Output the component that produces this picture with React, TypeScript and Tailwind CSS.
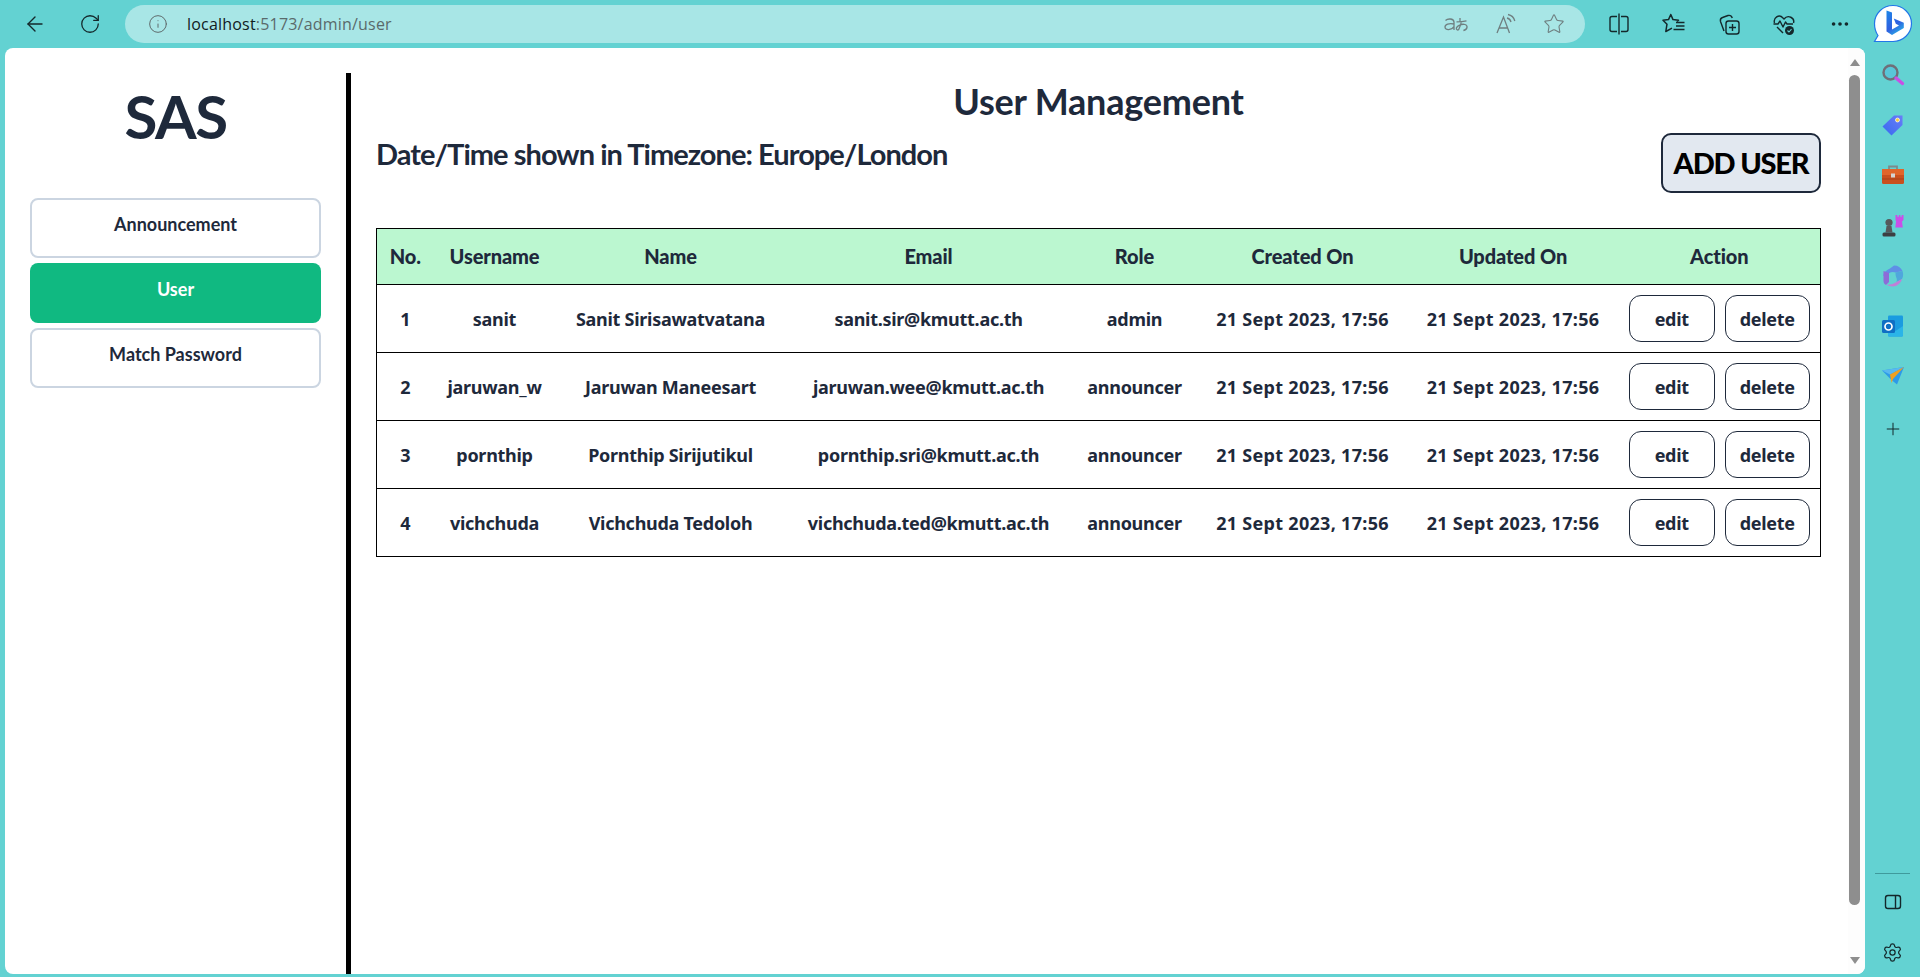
import { ArrowLeft, RotateCw, Info, Star, MoreHorizontal, Plus, Settings } from "lucide-react";

const users = [
  { no: 1, username: "sanit", name: "Sanit Sirisawatvatana", email: "sanit.sir@kmutt.ac.th", role: "admin" },
  { no: 2, username: "jaruwan_w", name: "Jaruwan Maneesart", email: "jaruwan.wee@kmutt.ac.th", role: "announcer" },
  { no: 3, username: "pornthip", name: "Pornthip Sirijutikul", email: "pornthip.sri@kmutt.ac.th", role: "announcer" },
  { no: 4, username: "vichchuda", name: "Vichchuda Tedoloh", email: "vichchuda.ted@kmutt.ac.th", role: "announcer" },
];

const columns = [
  { label: "No.", width: "w-[57px]" },
  { label: "Username", width: "w-[122px]" },
  { label: "Name", width: "w-[230px]" },
  { label: "Email", width: "w-[286px]" },
  { label: "Role", width: "w-[126px]" },
  { label: "Created On", width: "w-[210px]" },
  { label: "Updated On", width: "w-[211px]" },
  { label: "Action", width: "w-[202px]" },
];

const stamp = "21 Sept 2023, 17:56";

function Translate() {
  return (
    <svg width="26" height="24" viewBox="0 0 26 24" fill="none" stroke="#6f7f80" strokeWidth="1.3">
      <path d="M2.500 8.500c2-2 8-2.500 8.500 1.500v8M11 12c-5-1-9 .3-9 3 0 3.500 6.500 3.500 9-.5" />
      <path d="M17 6v3.500M13.500 9.800c3.500 0 7-.3 10-1M18.500 9c-.5 3.500-2 7-2.800 8.500-1 1-2.700.2-2.300-1.500.6-2 5-4.500 8.500-3.500 3.300 1 2.800 5-1.500 6" />
    </svg>
  );
}

function ReadAloud() {
  return (
    <svg width="24" height="24" viewBox="0 0 24 24" fill="none" stroke="#6f7f80" strokeWidth="1.3">
      <path d="M3 21 9.500 5l6 16M5.300 16h8.200" />
      <path d="M13 6c2 .5 3.500 2 4 4M14 2.500c3.500.7 6 3.300 6.800 6.500" />
    </svg>
  );
}

function SplitScreen() {
  return (
    <svg width="24" height="24" viewBox="0 0 24 24" fill="none" stroke="#14282b" strokeWidth="1.4">
      <path d="M12 1.500v21M10 4.500H5a2 2 0 0 0-2 2v11a2 2 0 0 0 2 2h5M14 4.500h5a2 2 0 0 1 2 2v11a2 2 0 0 1-2 2h-5" />
    </svg>
  );
}

function Favorites() {
  return (
    <svg width="24" height="24" viewBox="0 0 24 24" fill="none" stroke="#14282b" strokeWidth="1.500" strokeLinejoin="round">
      <path d="M15 9.500l1.500-1.300-5.500-.6L8.800 2.500 6.500 7.600 1 8.300l4 3.900-1.200 7.300 6.200-3.300" />
      <path d="M14 10.500h8.500M14 14h8.500M11.500 17.500h11" />
    </svg>
  );
}

function Collections() {
  return (
    <svg width="24" height="24" viewBox="0 0 24 24" fill="none" stroke="#14282b" strokeWidth="1.400">
      <rect x="9" y="9" width="13" height="13" rx="2.500" />
      <path d="M15.500 12v7M12 15.500h7" />
      <path d="M7 19 3.500 9.500c-.5-2 .5-3.500 2-4L11 3.500c2-.5 3.500.2 4.300 2.500" />
    </svg>
  );
}

function Health() {
  return (
    <svg width="24" height="24" viewBox="0 0 24 24" fill="none" stroke="#14282b" strokeWidth="1.400" strokeLinejoin="round">
      <path d="M2.500 11C1 6 7 1.500 11 6l1 1c4-5 11-1 9.500 4" />
      <path d="M1.500 12H6l2-3 3 6 2.500-5 1.500 2h6" />
      <path d="M5 15l6 6" />
      <circle cx="17.500" cy="18.500" r="4.500" fill="#14282b" stroke="none" />
      <path d="M15.500 18.500l1.500 1.500 2.500-2.800" stroke="#63d2d2" strokeWidth="1.100" />
    </svg>
  );
}

function Bing() {
  return (
    <svg width="40" height="40" viewBox="0 0 40 40" fill="none">
      <defs>
        <linearGradient id="bingFill" x1="12" y1="6" x2="30" y2="30" gradientUnits="userSpaceOnUse">
          <stop stopColor="#1b8ae8" />
          <stop offset="0.6" stopColor="#2f5fe0" />
          <stop offset="1" stopColor="#27c3e8" />
        </linearGradient>
      </defs>
      <path d="M20 1.500C30 1.500 38.500 9.500 38.500 19.500S30 37.500 20 37.500H1.500L5 31.500C2.800 28.300 1.500 24 1.500 19.500 1.500 9.500 10 1.500 20 1.500Z" fill="#fff" stroke="#2277e8" strokeWidth="1.200" />
      <path d="M13.500 6.500l5.500 2v17l7-4-3.200-1.700-2-5.300 10 4.300v5.200L19 31l-5.500-3.500Z" fill="url(#bingFill)" />
    </svg>
  );
}

function RailSearch() {
  return (
    <svg width="24" height="24" viewBox="0 0 24 24" fill="none">
      <circle cx="9.500" cy="9.500" r="7" fill="#58c6d8" stroke="#6f6f78" strokeWidth="2.400" />
      <path d="M15 15l6.500 5.500" stroke="#c84fe6" strokeWidth="3.400" strokeLinecap="round" />
    </svg>
  );
}

function RailTag() {
  return (
    <svg width="24" height="24" viewBox="0 0 24 24" fill="none">
      <defs>
        <linearGradient id="tagFill" x1="4" y1="20" x2="22" y2="3" gradientUnits="userSpaceOnUse">
          <stop stopColor="#3d6cf0" />
          <stop offset="1" stopColor="#6a7cf8" />
        </linearGradient>
      </defs>
      <path d="M13 2.500h8.500v9.500L10.500 22.500 1.500 13.500Z" fill="url(#tagFill)" />
      <circle cx="16.500" cy="7" r="2" fill="#f5cd3d" stroke="#fff" strokeWidth="0.700" />
    </svg>
  );
}

function RailToolbox() {
  return (
    <svg width="24" height="24" viewBox="0 0 24 24" fill="none">
      <path d="M8 6V3.500h8V6" stroke="#7d8a8c" strokeWidth="1.800" />
      <rect x="1" y="6" width="22" height="15" rx="1.500" fill="#c9501f" />
      <rect x="1" y="6" width="22" height="6" fill="#e0652b" />
      <rect x="1" y="15.500" width="22" height="1" fill="#a8401a" />
      <rect x="10" y="10.500" width="4" height="4" fill="#d4d4d4" />
    </svg>
  );
}

function RailGames() {
  return (
    <svg width="24" height="24" viewBox="0 0 24 24" fill="none">
      <path d="M14.500 1h1.800v1.800h1.500V1h1.600v1.800h1.300V1h1.800v5l-1.500 1.500.8 6h-7.500l.8-6L14.500 6Z" fill="#c94fe8" />
      <circle cx="8" cy="8.500" r="3.600" fill="#55595c" />
      <path d="M5.500 12h5l1 6.500h-7Z" fill="#55595c" />
      <rect x="1.500" y="18.500" width="13" height="4" rx="1.500" fill="#3c3f42" />
    </svg>
  );
}

function RailM365() {
  return (
    <svg width="24" height="24" viewBox="0 0 24 24" fill="none">
      <path d="M9 4.500 13 1.500c4 0 7 2 8.500 5.500l-7 1.500C11 7 7 8.500 7 12H2.500C2 9 5 6.500 9 4.500Z" fill="#5f8fe6" />
      <path d="M2.500 7v10c0 2 1 3 2.500 4L8 18V9Z" fill="#8d6bd8" />
      <path d="M21.500 7c1 3 .8 6-.5 8l-5.500 3c.5-1.500.5-2.500 0-4-.5-1-1-2.500-1-5.500Z" fill="#4fa7dc" />
      <path d="M5 20.500c3 .5 8-.5 10.500-2.500l5.500-3c-1 4-5 7.500-9.500 7.500-2.500 0-4.500-.7-6.500-2Z" fill="#c07fd8" />
    </svg>
  );
}

function RailOutlook() {
  return (
    <svg width="24" height="24" viewBox="0 0 24 24" fill="none">
      <rect x="7" y="1.500" width="15" height="21" rx="1.200" fill="#1a9be0" />
      <path d="M7 13l7.500 4 7.500-5v9.500a1.200 1.200 0 0 1-1.200 1H8.200a1.200 1.200 0 0 1-1.200-1Z" fill="#2bb4e8" />
      <rect x="1" y="6" width="13" height="13" rx="1.500" fill="#0f6fc4" />
      <circle cx="7.500" cy="12.500" r="3.500" stroke="#fff" strokeWidth="1.700" />
    </svg>
  );
}

function RailSend() {
  return (
    <svg width="24" height="24" viewBox="0 0 24 24" fill="none">
      <path d="M1 6.500 23 3 16 20.500 10.500 16Z" fill="#2d9ae8" />
      <path d="M1 6.500 23 3 9 10.500Z" fill="#59b8f0" />
      <path d="M23 3 9 10.500 10.500 19 12 15Z" fill="#f0a020" />
    </svg>
  );
}

function RailPanel() {
  return (
    <svg width="20" height="20" viewBox="0 0 20 20" fill="none" stroke="#14282b" strokeWidth="1.400">
      <rect x="2.500" y="3.500" width="15" height="13" rx="2.500" />
      <path d="M12.500 3.500v13" />
    </svg>
  );
}

const railIcons = [RailSearch, RailTag, RailToolbox, RailGames, RailM365, RailOutlook, RailSend];

export default function App() {
  return (
    <div className="flex h-screen flex-col overflow-hidden bg-[#63d2d2] font-['Lato',sans-serif] text-[#1e293b]">
      {/* Browser toolbar */}
      <div className="flex h-12 shrink-0 items-center">
        <div className="flex w-[125px] shrink-0 items-center pl-[23px] text-[#14282b]">
          <ArrowLeft size={24} strokeWidth={1.4} />
          <RotateCw size={22} strokeWidth={1.4} className="ml-[32px]" />
        </div>
        <div className="flex h-[38px] w-[1460px] shrink-0 items-center rounded-full bg-[#a8e6e6] pl-[23px] pr-[20px]">
          <Info size={20} strokeWidth={1.2} className="text-[#5f6b6c]" />
          <span className="ml-[19px] font-['Open_Sans',sans-serif] text-[16px] tracking-[0.2px] text-[#5a6a6b]">
            <span className="text-[#10201f]">localhost</span>:5173/admin/user
          </span>
          <div className="ml-auto flex items-center gap-[25px]">
            <Translate />
            <ReadAloud />
            <Star size={22} strokeWidth={1.2} className="text-[#6f7f80]" />
          </div>
        </div>
        <div className="ml-[22px] flex items-center gap-[31px]">
          <SplitScreen />
          <Favorites />
          <Collections />
          <Health />
        </div>
        <MoreHorizontal size={22} strokeWidth={2} className="ml-[33px] text-[#14282b]" />
        <div className="ml-[22px]">
          <Bing />
        </div>
      </div>

      <div className="flex min-h-0 flex-1 pb-[3px] pl-[5px]">
        {/* Page area */}
        <div className="flex min-w-0 flex-1 overflow-hidden rounded-lg bg-white pt-[25px]">
          <aside className="flex w-[346px] shrink-0 flex-col border-r-[5px] border-black px-[25px]">
            <h1 className="mt-[7px] text-center text-[60px] font-bold leading-[72px] tracking-[-1.5px]">SAS</h1>
            <nav className="mt-[46px] flex flex-col gap-[5px]">
              <a className="h-[60px] rounded-lg border-2 border-[#cbd5e1] pt-[12px] text-center text-[18px] font-bold leading-6">Announcement</a>
              <a className="h-[60px] rounded-lg bg-[#10b981] pt-[14px] text-center text-[18px] font-bold leading-6 text-white">User</a>
              <a className="h-[60px] rounded-lg border-2 border-[#cbd5e1] pt-[12px] text-center text-[18px] font-bold leading-6">Match Password</a>
            </nav>
          </aside>

          <main className="min-w-0 flex-1 pl-[25px] pr-[27px]">
            <h2 className="mt-[8px] text-center text-[36px] font-bold leading-10 tracking-[-0.2px]">User Management</h2>
            <div className="mt-[12px] flex items-start justify-between">
              <p className="mt-[3px] text-[29px] font-bold leading-9 tracking-[-0.96px]">Date/Time shown in Timezone: Europe/London</p>
              <button className="h-[60px] w-[160px] rounded-[10px] border-2 border-[#1e293b] bg-[#e2e8f0] text-[29px] font-black tracking-[-1.2px] text-black">
                ADD USER
              </button>
            </div>
            <table className="mt-[35px] w-[1444px] table-fixed border-collapse border border-black">
              <colgroup>
                {columns.map((c) => (
                  <col key={c.label} className={c.width} />
                ))}
              </colgroup>
              <thead>
                <tr className="h-[56px] bg-[#bbf7d0]">
                  {columns.map((c) => (
                    <th key={c.label} className="pb-[2px] text-center text-[20px] font-black tracking-[-0.1px]">
                      {c.label}
                    </th>
                  ))}
                </tr>
              </thead>
              <tbody className="font-['Noto_Sans',sans-serif] text-[18px] font-bold tracking-[-0.28px]">
                {users.map((u) => (
                  <tr key={u.no} className="h-[68px] border-t border-black text-center">
                    <td className="pt-[2px]">{u.no}</td>
                    <td className="pt-[2px]">{u.username}</td>
                    <td className="pt-[2px]">{u.name}</td>
                    <td className="pt-[2px]">{u.email}</td>
                    <td className="pt-[2px]">{u.role}</td>
                    <td className="pt-[2px] tracking-[0.3px]">{stamp}</td>
                    <td className="pt-[2px] tracking-[0.3px]">{stamp}</td>
                    <td>
                      <div className="flex justify-center gap-[10px] pl-[9px] pr-[9px]">
                        <button className="h-[47px] w-[86px] rounded-xl border border-[#1e293b] pt-[2px]">edit</button>
                        <button className="h-[47px] w-[85px] rounded-xl border border-[#1e293b] pt-[2px]">delete</button>
                      </div>
                    </td>
                  </tr>
                ))}
              </tbody>
            </table>
          </main>

          {/* Scrollbar */}
          <div className="-mt-[25px] flex w-[17px] shrink-0 flex-col items-center bg-[#fdfdfd] pr-[4px]">
            <div className="mt-[11px] h-0 w-0 border-x-[5px] border-b-[7px] border-x-transparent border-b-[#8e8e8e]" />
            <div className="mt-[9px] w-[11px] flex-1 rounded-full bg-[#8e8e8e]" />
            <div className="mb-[10px] mt-[52px] h-0 w-0 border-x-[5px] border-t-[7px] border-x-transparent border-t-[#8e8e8e]" />
          </div>
        </div>

        {/* Edge sidebar */}
        <div className="flex w-[55px] shrink-0 flex-col items-center pt-[2px] text-[#14282b]">
          {railIcons.map((Icon, i) => (
            <div key={i} className="flex h-[50.2px] items-center justify-center">
              <Icon />
            </div>
          ))}
          <div className="mt-[3px] flex h-[50px] items-center justify-center">
            <Plus size={20} strokeWidth={1.2} />
          </div>
          <div className="mt-auto h-px w-[35px] bg-[#3f9a9c]" />
          <div className="flex h-[56px] items-center justify-center">
            <RailPanel />
          </div>
          <div className="flex h-[44px] items-center justify-center">
            <Settings size={21} strokeWidth={1.4} />
          </div>
        </div>
      </div>
    </div>
  );
}
